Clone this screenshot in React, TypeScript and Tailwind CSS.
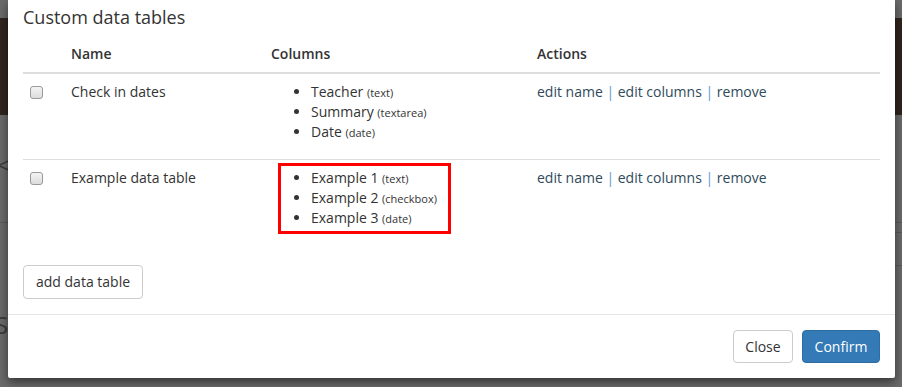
import React from "react";

type Col = { name: string; type: string };

const rows: { name: string; cols: Col[]; marked?: boolean }[] = [
  {
    name: "Check in dates",
    cols: [
      { name: "Teacher", type: "text" },
      { name: "Summary", type: "textarea" },
      { name: "Date", type: "date" },
    ],
  },
  {
    name: "Example data table",
    marked: true,
    cols: [
      { name: "Example 1", type: "text" },
      { name: "Example 2", type: "checkbox" },
      { name: "Example 3", type: "date" },
    ],
  },
];

function Box() {
  return (
    <span className="block mt-[4px] ml-[-1px] w-[13px] h-[13px] rounded-[3px] border border-[#9a9a9a] bg-gradient-to-b from-[#f4f4f4] to-[#dcdcdc]" />
  );
}

function Items({ cols }: { cols: Col[] }) {
  return (
    <>
      {cols.map((c) => (
        <li key={c.name} className="h-[20px] leading-[20px]">
          {c.name} <span className="text-[11px] leading-none">({c.type})</span>
        </li>
      ))}
    </>
  );
}

function Actions() {
  return (
    <div className="leading-[20px] text-[#2f4a5c]">
      edit name <span className="text-[#5b9bd5]">|</span> edit columns{" "}
      <span className="text-[#5b9bd5]">|</span> remove
    </div>
  );
}

export default function App() {
  return (
    <div
      className="relative w-[902px] h-[387px] overflow-hidden bg-[#6a6a6a] text-[14px] text-[#333]"
      style={{ fontFamily: '"Open Sans", "Noto Sans", sans-serif' }}
    >
      {/* page behind the backdrop */}
      <div className="absolute left-0 right-0 top-[18px] h-[97px] bg-[#30241f]" />
      <div className="absolute left-0 right-0 top-[222px] h-px bg-[#5a5a5a]" />
      <div className="absolute right-0 w-[10px] top-[232px] h-px bg-[#5a5a5a]" />
      <div className="absolute right-0 w-[10px] top-[265px] h-px bg-[#5a5a5a]" />
      <div className="absolute left-[-3px] top-[150px] text-[24px] leading-[30px] text-[#3a3a3a]">&lt;</div>
      <div className="absolute left-[-5px] top-[310px] text-[24px] leading-[30px] text-[#3a3a3a]">S</div>

      <div className="relative ml-[8px] w-[887px] h-[378px] bg-white rounded-b-[2px] shadow-[0_4px_10px_rgba(0,0,0,0.5)] flex flex-col">
        <div className="px-[15px] pt-[4px]">
          <h4 className="text-[18px] leading-[26px] font-normal text-[#333]">Custom data tables</h4>
        </div>

        <div className="px-[15px] pt-[6px] pb-[15px]">
          <table className="w-[857px] table-fixed border-collapse">
            <colgroup>
              <col className="w-[40px]" />
              <col className="w-[200px]" />
              <col className="w-[266px]" />
              <col className="w-[351px]" />
            </colgroup>
            <thead>
              <tr className="border-b-2 border-[#ddd]">
                <th className="p-[8px]" />
                <th className="p-[8px] text-left font-semibold leading-[20px]">Name</th>
                <th className="p-[8px] text-left font-semibold leading-[20px]">Columns</th>
                <th className="p-[8px] text-left font-semibold leading-[20px]">Actions</th>
              </tr>
            </thead>
            <tbody>
              {rows.map((r, i) => (
                <tr key={r.name} className={i === 0 ? "border-b border-[#ddd]" : ""}>
                  <td className="p-[8px] align-top">
                    <Box />
                  </td>
                  <td className="p-[8px] align-top leading-[20px]">{r.name}</td>
                  <td className="p-[8px] align-top">
                    {r.marked ? (
                      <div className="ml-[7px] mt-[-5px] w-[173px] border-[3px] border-[#f00] pt-[2px] pb-[3px]">
                        <ul className="list-disc pl-[30px]">
                          <Items cols={r.cols} />
                        </ul>
                      </div>
                    ) : (
                      <ul className="list-disc pl-[40px] mb-[9px]">
                        <Items cols={r.cols} />
                      </ul>
                    )}
                  </td>
                  <td className="p-[8px] align-top">
                    <Actions />
                  </td>
                </tr>
              ))}
            </tbody>
          </table>

          <button className="mt-[23px] h-[34px] px-[12px] border border-[#ccc] rounded-[4px] bg-white leading-[20px] text-[#333]">
            add data table
          </button>
        </div>

        <div className="border-t border-[#e5e5e5] px-[15px] pt-[15px] flex justify-end gap-[9px]">
          <button className="h-[33px] w-[60px] border border-[#ccc] rounded-[4px] bg-white text-[#333] leading-[20px]">
            Close
          </button>
          <button className="h-[33px] w-[78px] border border-[#2e6da4] rounded-[4px] bg-[#337ab7] text-white leading-[20px]">
            Confirm
          </button>
        </div>
      </div>
    </div>
  );
}
